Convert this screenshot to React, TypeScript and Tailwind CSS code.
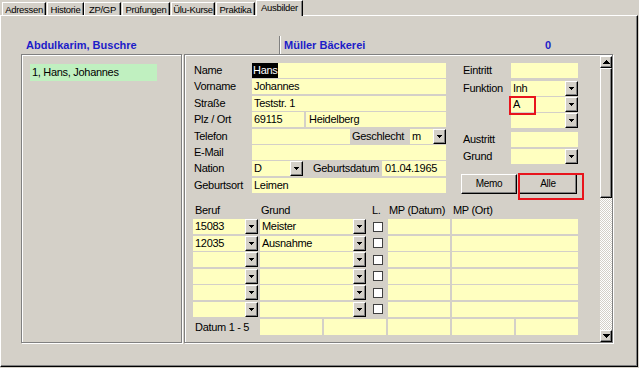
import React from "react";

const field =
  "h-[15px] leading-[15px] bg-[#ffffc0] pl-[2px] whitespace-nowrap overflow-hidden";
const raised =
  "border border-t-white border-l-white border-r-black border-b-black shadow-[inset_-1px_-1px_0_#808080] bg-[#d4d0c8]";

function DownTri() {
  return (
    <svg width="5" height="3" viewBox="0 0 5 3" shapeRendering="crispEdges" className="block">
      <polygon points="0,0 5,0 2.5,3" fill="#000" />
    </svg>
  );
}

function DD() {
  return (
    <div className={`w-[13px] h-[15px] shrink-0 flex items-center justify-center ${raised}`}>
      <DownTri />
    </div>
  );
}

function Combo({ w, text = "" }: { w: string; text?: string }) {
  return (
    <div className={`flex h-[15px] ${w}`}>
      <div className={`${field} flex-1`}>{text}</div>
      <DD />
    </div>
  );
}

function Row({ label, children }: { label: string; children?: React.ReactNode }) {
  return (
    <div className="flex h-[15px]">
      <div className="w-[59px] pl-[1px] leading-[15px] whitespace-nowrap">{label}</div>
      {children}
    </div>
  );
}

function RRow({ label, children, cls = "" }: { label: string; children?: React.ReactNode; cls?: string }) {
  return (
    <div className={`flex h-[15px] ${cls}`}>
      <div className="w-[50px] pl-[2px] leading-[15px] whitespace-nowrap">{label}</div>
      {children}
    </div>
  );
}

function Tab({ label, cls, selected = false }: { label: string; cls: string; selected?: boolean }) {
  return (
    <div
      className={`${cls} ${
        selected ? "h-[16px] -mb-[1px] z-10 leading-[12px] pt-[1px]" : "h-[13px] leading-[13px]"
      } relative bg-[#d4d0c8] border-t border-l border-t-white border-l-white border-r border-r-black shadow-[inset_-1px_0_0_#808080] text-center whitespace-nowrap overflow-hidden text-[9.5px] tracking-[-0.3px]`}
    >
      {label}
    </div>
  );
}

function GridRow({ beruf = "", grund = "" }: { beruf?: string; grund?: string }) {
  return (
    <div className="flex h-[15px]">
      <Combo w="w-[65px]" text={beruf} />
      <div className="w-[2px]" />
      <Combo w="w-[106px]" text={grund} />
      <div className="w-[22px] flex items-center">
        <div className="ml-[7px] w-[10px] h-[10px] bg-white border border-[#404040]" />
      </div>
      <div className={`${field} w-[62px]`} />
      <div className="w-[2px]" />
      <div className={`${field} w-[126px]`} />
    </div>
  );
}

export default function App() {
  return (
    <div className="w-[639px] h-[368px] bg-[#d4d0c8] text-[11px] tracking-[-0.3px] text-black font-['Liberation_Sans',Arial,sans-serif] overflow-hidden">
      {/* tabs */}
      <div className="flex items-end h-[15px]">
        <Tab label="Adressen" cls="ml-[2px] w-[44px]" />
        <Tab label="Historie" cls="ml-[1px] w-[37px]" />
        <Tab label="ZP/GP" cls="w-[37px]" />
        <Tab label="Prüfungen" cls="ml-[1px] w-[48px]" />
        <Tab label="Ülu-Kurse" cls="ml-[1px] w-[44px]" />
        <Tab label="Praktika" cls="ml-[1px] w-[39px]" />
        <Tab label="Ausbilder" cls="ml-[1px] w-[47px]" selected />
      </div>

      {/* main frame */}
      <div className="w-[638px] h-[352px] border-t border-l border-t-white border-l-white border-r border-b border-r-black border-b-black shadow-[inset_-1px_-1px_0_#808080]">
        {/* header */}
        <div className="flex items-center h-[18px] mt-[20px] font-bold text-[#1c1cc8] tracking-normal">
          <div className="w-[278px] pl-[25px] whitespace-nowrap">Abdulkarim, Buschre</div>
          <div className="w-[2px] h-[18px] border-l border-l-[#808080] border-r border-r-white" />
          <div className="w-[264px] pl-[3px] whitespace-nowrap">Müller Bäckerei</div>
          <div>0</div>
        </div>

        {/* panels */}
        <div className="flex">
          {/* left list */}
          <div className="ml-[20px] w-[161px] h-[289px] border border-[#808080] shadow-[1px_1px_0_#fff,inset_1px_1px_0_#fff]">
            <div className="ml-[8px] mt-[9px] w-[127px] h-[17px] leading-[17px] bg-[#c0f0c0] pl-[2px] whitespace-nowrap">
              1, Hans, Johannes
            </div>
          </div>

          {/* right form */}
          <div className="ml-[2px] w-[429px] h-[289px] border border-[#808080] shadow-[1px_1px_0_#fff,inset_1px_1px_0_#fff] flex">
            <div className="flex-1 pl-[8px] pt-[8px]">
              {/* top section */}
              <div className="flex h-[141px]">
                <div className="w-[253px] flex flex-col gap-[1.4px]">
                  <Row label="Name">
                    <div className={`${field} w-[194px] !pl-0`}>
                      <span className="inline-block h-[15px] bg-black text-white px-[1px]">Hans</span>
                    </div>
                  </Row>
                  <Row label="Vorname">
                    <div className={`${field} w-[194px]`}>Johannes</div>
                  </Row>
                  <Row label="Straße">
                    <div className={`${field} w-[194px]`}>Teststr. 1</div>
                  </Row>
                  <Row label="Plz / Ort">
                    <div className={`${field} w-[52px]`}>69115</div>
                    <div className="w-[2px]" />
                    <div className={`${field} w-[140px] !pl-[3px]`}>Heidelberg</div>
                  </Row>
                  <Row label="Telefon">
                    <div className={`${field} w-[98px]`} />
                    <div className="w-[60px] pl-[2px] leading-[15px] whitespace-nowrap">Geschlecht</div>
                    <Combo w="w-[36px]" text="m" />
                  </Row>
                  <Row label="E-Mail">
                    <div className={`${field} w-[194px]`} />
                  </Row>
                  <Row label="Nation">
                    <Combo w="w-[51px]" text="D" />
                    <div className="w-[79px] pl-[10px] leading-[15px] whitespace-nowrap">Geburtsdatum</div>
                    <div className={`${field} w-[64px] !pl-[3px]`}>01.04.1965</div>
                  </Row>
                  <Row label="Geburtsort">
                    <div className={`${field} w-[194px]`}>Leimen</div>
                  </Row>
                </div>

                {/* right column */}
                <div className="ml-[15px] w-[123px] relative">
                  <RRow label="Eintritt">
                    <div className={`${field} w-[67px]`} />
                  </RRow>
                  <RRow label="Funktion" cls="mt-[3px]">
                    <Combo w="w-[67px]" text="Inh" />
                  </RRow>
                  <RRow label="" cls="mt-[1px]">
                    <Combo w="w-[67px]" text="A" />
                  </RRow>
                  <RRow label="" cls="mt-[1px]">
                    <Combo w="w-[67px]" />
                  </RRow>
                  <RRow label="Austritt" cls="mt-[4px]">
                    <div className={`${field} w-[67px]`} />
                  </RRow>
                  <RRow label="Grund" cls="mt-[2px]">
                    <Combo w="w-[67px]" />
                  </RRow>
                  <div className="flex mt-[10px]">
                    <div className={`w-[56px] h-[20px] leading-[18px] text-center text-[10px] ${raised}`}>Memo</div>
                    <div className="w-[2px]" />
                    <div className={`w-[58px] h-[20px] leading-[18px] text-center text-[10px] ${raised}`}>Alle</div>
                  </div>
                  <div className="absolute left-[48px] top-[33px] w-[27px] h-[19px] border-2 border-[#e8141c]" />
                  <div className="absolute left-[57px] top-[110px] w-[66px] h-[27px] border-2 border-[#e8141c]" />
                </div>
              </div>

              {/* grid header */}
              <div className="flex h-[15px] leading-[13px] whitespace-nowrap">
                <div className="w-[67px] pl-[2px]">Beruf</div>
                <div className="w-[106px] pl-[1px]">Grund</div>
                <div className="w-[22px] pl-[6px]">L.</div>
                <div className="w-[64px] pl-[1px]">MP (Datum)</div>
                <div className="w-[126px] pl-[1px]">MP (Ort)</div>
              </div>

              {/* grid rows */}
              <div className="flex flex-col gap-[1.6px]">
                <GridRow beruf="15083" grund="Meister" />
                <GridRow beruf="12035" grund="Ausnahme" />
                <GridRow />
                <GridRow />
                <GridRow />
                <GridRow />
              </div>

              {/* Datum row */}
              <div className="flex h-[16px] mt-[2px]">
                <div className="w-[67px] pl-[2px] leading-[16px] whitespace-nowrap">Datum 1 - 5</div>
                <div className="flex gap-[2px]">
                  <div className="h-[16px] w-[62px] bg-[#ffffc0]" />
                  <div className="h-[16px] w-[62px] bg-[#ffffc0]" />
                  <div className="h-[16px] w-[62px] bg-[#ffffc0]" />
                  <div className="h-[16px] w-[62px] bg-[#ffffc0]" />
                  <div className="h-[16px] w-[62px] bg-[#ffffc0]" />
                </div>
              </div>
            </div>

            {/* scrollbar */}
            <div className="w-[12px] pt-[1px] flex flex-col">
              <div className={`w-[12px] h-[12px] flex items-center justify-center ${raised}`}>
                <svg width="7" height="4" viewBox="0 0 7 4" shapeRendering="crispEdges" className="block">
                  <polygon points="3.5,0 7,4 0,4" fill="#000" />
                </svg>
              </div>
              <div className={`w-[12px] h-[130px] ${raised}`} />
              <div className="flex-1 bg-[image:repeating-conic-gradient(#ffffff_0_25%,#d4d0c8_0_50%)] bg-[length:2px_2px]" />
              <div className={`w-[12px] h-[12px] flex items-center justify-center ${raised}`}>
                <svg width="7" height="4" viewBox="0 0 7 4" shapeRendering="crispEdges" className="block">
                  <polygon points="0,0 7,0 3.5,4" fill="#000" />
                </svg>
              </div>
            </div>
          </div>
        </div>
      </div>
    </div>
  );
}
